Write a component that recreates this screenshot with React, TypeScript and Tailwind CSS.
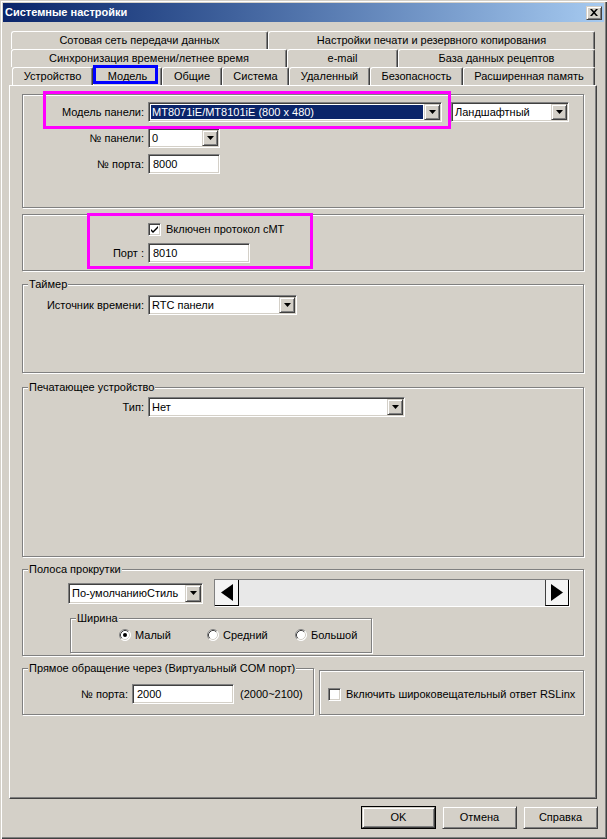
import React from "react";

const sunken =
  "border border-t-[#808080] border-l-[#808080] border-b-white border-r-white shadow-[inset_1px_1px_0_#404040,inset_-1px_-1px_0_#d4d0c8]";
const raised =
  "border border-t-[#d4d0c8] border-l-[#d4d0c8] border-b-[#404040] border-r-[#404040] shadow-[inset_1px_1px_0_#ffffff,inset_-1px_-1px_0_#808080]";
const etched =
  "relative border border-[#808080] shadow-[1px_1px_0_#ffffff,inset_1px_1px_0_#ffffff]";

function DropBtn() {
  return (
    <div className={`flex h-full w-[16px] shrink-0 items-center justify-center bg-[#d4d0c8] ${raised}`}>
      <svg width="7" height="4" viewBox="0 0 7 4">
        <path d="M0 0h7L3.5 4z" fill="#000" />
      </svg>
    </div>
  );
}

function Combo({ value, className, selected }: { value: string; className: string; selected?: boolean }) {
  return (
    <div className={`flex bg-white p-[1px] ${sunken} ${className}`}>
      <div className="flex min-w-0 flex-1 items-stretch p-[1px]">
        <div
          className={`flex flex-1 items-center overflow-hidden whitespace-nowrap pl-[1px] ${
            selected ? "bg-[#0a246a] text-white" : ""
          }`}
        >
          {value}
        </div>
      </div>
      <DropBtn />
    </div>
  );
}

function Input({ value, className }: { value: string; className: string }) {
  return <div className={`flex h-[20px] items-center bg-white pl-[4px] ${sunken} ${className}`}>{value}</div>;
}

function Group({ label, className, children }: { label?: string; className: string; children?: React.ReactNode }) {
  return (
    <div className={`${etched} ${className}`}>
      {label && (
        <span className="absolute -top-[7px] left-[5px] whitespace-nowrap bg-[#d4d0c8] px-[1px] leading-[13px]">
          {label}
        </span>
      )}
      {children}
    </div>
  );
}

function Check({ checked }: { checked?: boolean }) {
  return (
    <div className={`flex h-[13px] w-[13px] shrink-0 items-center justify-center bg-white ${sunken}`}>
      {checked && (
        <svg width="9" height="9" viewBox="0 0 9 9">
          <path d="M1 4l2 2 5-5v2l-5 5-2-2z" fill="#000" />
        </svg>
      )}
    </div>
  );
}

function Radio({ checked }: { checked?: boolean }) {
  return (
    <svg width="12" height="12" viewBox="0 0 12 12" className="shrink-0">
      <circle cx="6" cy="6" r="5.5" fill="#fff" />
      <path d="M2.11 9.89A5.5 5.5 0 0 1 9.89 2.11" stroke="#808080" fill="none" />
      <path d="M9.89 2.11A5.5 5.5 0 0 1 2.11 9.89" stroke="#ffffff" fill="none" />
      <path d="M2.82 9.18A4.5 4.5 0 0 1 9.18 2.82" stroke="#404040" fill="none" />
      <path d="M9.18 2.82A4.5 4.5 0 0 1 2.82 9.18" stroke="#d4d0c8" fill="none" />
      {checked && <circle cx="6" cy="6" r="2" fill="#000" />}
    </svg>
  );
}

function Tab({ label, className, children }: { label: string; className: string; children?: React.ReactNode }) {
  return (
    <div
      className={`relative flex h-[18px] shrink-0 items-center justify-center whitespace-nowrap rounded-tl-[3px] rounded-tr-[2px] border-t border-l border-r border-t-white border-l-white border-r-[#404040] bg-[#d4d0c8] shadow-[inset_-1px_0_0_#808080] ${className}`}
    >
      {label}
      {children}
    </div>
  );
}

function Button({ label, def }: { label: string; def?: boolean }) {
  if (def) {
    return (
      <div className="h-[23px] w-[75px] border border-black">
        <div className={`flex h-full w-full items-center justify-center bg-[#d4d0c8] ${raised}`}>{label}</div>
      </div>
    );
  }
  return (
    <div className={`flex h-[23px] w-[75px] items-center justify-center bg-[#d4d0c8] ${raised}`}>{label}</div>
  );
}

export default function App() {
  return (
    <div className="flex h-[839px] w-[607px] flex-col bg-[#d4d0c8] p-[3px] font-['Liberation_Sans',Arial,sans-serif] text-[11px] leading-[13px] text-black shadow-[inset_1px_1px_0_#d4d0c8,inset_2px_2px_0_#ffffff,inset_-1px_-1px_0_#404040,inset_-2px_-2px_0_#808080]">
      {/* Title bar */}
      <div className="flex h-[19px] shrink-0 items-center justify-between bg-linear-to-r from-[#0a246a] to-[#a6caf0] pl-[2px] pr-[2px]">
        <span className="font-bold text-white">Системные настройки</span>
        <div className={`flex h-[14px] w-[16px] items-center justify-center bg-[#d4d0c8] ${raised}`}>
          <svg width="8" height="7" viewBox="0 0 8 7">
            <path d="M0 0h2l2 2.2L6 0h2L5 3.5 8 7H6L4 4.8 2 7H0l3-3.5z" fill="#000" />
          </svg>
        </div>
      </div>

      {/* Tabs + panel */}
      <div className="ml-[6px] mt-[9px] flex flex-col">
        <div className="ml-[2px] flex">
          <Tab label="Сотовая сеть передачи данных" className="w-[257px]" />
          <Tab label="Настройки печати и резервного копирования" className="w-[327px]" />
        </div>
        <div className="ml-[2px] flex">
          <Tab label="Синхронизация времени/летнее время" className="w-[276px]" />
          <Tab label="e-mail" className="w-[111px]" />
          <Tab label="База данных рецептов" className="w-[197px]" />
        </div>
        <div className="ml-[3px] flex">
          <Tab label="Устройство" className="w-[81px]" />
          <Tab label="Модель" className="z-10 w-[69px]">
            <div className="absolute -left-[1px] -top-[3px] h-[19px] w-[65px] border-[3px] border-[#0000ff]" />
          </Tab>
          <Tab label="Общие" className="w-[60px]" />
          <Tab label="Система" className="w-[67px]" />
          <Tab label="Удаленный" className="w-[81px]" />
          <Tab label="Безопасность" className="w-[93px]" />
          <Tab label="Расширенная память" className="w-[132px]" />
        </div>

        <div className="flex h-[714px] w-[588px] flex-col border-t border-l border-r border-b border-t-white border-l-white border-r-[#404040] border-b-[#404040] pl-[12px] shadow-[inset_-1px_-1px_0_#808080]">
          {/* Model group */}
          <Group className="mt-[8px] h-[114px] w-[562px] shrink-0">
            <div className="pointer-events-none absolute -top-[4px] left-[20px] h-[38px] w-[408px] border-[3px] border-[#ff00ff]" />
            <div className="mt-[7px] flex h-[20px] items-center">
              <div className="w-[125px] pr-[4px] text-right">Модель панели:</div>
              <Combo value="MT8071iE/MT8101iE (800 x 480)" className="h-[20px] w-[294px]" selected />
              <Combo value="Ландшафтный" className="ml-[9px] h-[20px] w-[118px]" />
            </div>
            <div className="mt-[6px] flex h-[20px] items-center">
              <div className="w-[125px] pr-[4px] text-right">№ панели:</div>
              <Combo value="0" className="h-[20px] w-[72px]" />
            </div>
            <div className="mt-[6px] flex h-[20px] items-center">
              <div className="w-[125px] pr-[4px] text-right">№ порта:</div>
              <Input value="8000" className="w-[72px]" />
            </div>
          </Group>

          {/* cMT group */}
          <Group className="mt-[6px] h-[57px] w-[562px] shrink-0">
            <div className="pointer-events-none absolute -top-[2px] left-[64px] h-[56px] w-[226px] border-[3px] border-[#ff00ff]" />
            <div className="ml-[125px] mt-[8px] flex h-[13px] items-center gap-[5px]">
              <Check checked />
              <span>Включен протокол cMT</span>
            </div>
            <div className="mt-[7px] flex h-[20px] items-center">
              <div className="w-[125px] pr-[4px] text-right">Порт :</div>
              <Input value="8010" className="w-[102px]" />
            </div>
          </Group>

          {/* Timer */}
          <Group label="Таймер" className="mt-[13px] h-[89px] w-[562px] shrink-0">
            <div className="mt-[10px] flex h-[20px] items-center">
              <div className="w-[125px] pr-[4px] text-right">Источник времени:</div>
              <Combo value="RTC панели" className="h-[20px] w-[149px]" />
            </div>
          </Group>

          {/* Printer */}
          <Group label="Печатающее устройство" className="mt-[14px] h-[170px] w-[562px] shrink-0">
            <div className="mt-[9px] flex h-[20px] items-center">
              <div className="w-[125px] pr-[4px] text-right">Тип:</div>
              <Combo value="Нет" className="h-[20px] w-[257px]" />
            </div>
          </Group>

          {/* Scrollbar */}
          <Group label="Полоса прокрутки" className="mt-[12px] h-[87px] w-[562px] shrink-0">
            <div className="ml-[45px] mt-[9px] flex h-[28px] items-center gap-[11px]">
              <Combo value="По-умолчаниюСтиль" className="h-[21px] w-[135px]" />
              <div className="flex h-[28px] w-[356px] border border-t-[#808080] border-l-[#808080] border-b-white border-r-white bg-[#e8e8e8]">
                <div className="flex h-full w-[24px] items-center justify-center border-r border-b border-r-black border-b-black bg-[#f4f4f4]">
                  <svg width="12" height="17" viewBox="0 0 12 17">
                    <path d="M12 0v17L0 8.5z" fill="#000" />
                  </svg>
                </div>
                <div className="flex-1" />
                <div className="flex h-full w-[24px] items-center justify-center border-l border-r border-b border-l-[#404040] border-r-black border-b-black bg-[#f4f4f4]">
                  <svg width="12" height="17" viewBox="0 0 12 17">
                    <path d="M0 0v17l12-8.5z" fill="#000" />
                  </svg>
                </div>
              </div>
            </div>
            <Group label="Ширина" className="ml-[47px] mt-[11px] h-[35px] w-[302px]">
              <div className="ml-[48px] mt-[10px] flex h-[12px] items-center">
                <div className="flex w-[88px] shrink-0 items-center gap-[4px]">
                  <Radio checked />
                  <span>Малый</span>
                </div>
                <div className="flex w-[88px] shrink-0 items-center gap-[4px]">
                  <Radio />
                  <span>Средний</span>
                </div>
                <div className="flex shrink-0 items-center gap-[4px]">
                  <Radio />
                  <span>Большой</span>
                </div>
              </div>
            </Group>
          </Group>

          {/* Bottom row */}
          <div className="mt-[12px] flex gap-[5px]">
            <Group label="Прямое обращение через (Виртуальный COM порт)" className="h-[47px] w-[292px] shrink-0">
              <div className="mt-[15px] flex h-[20px] items-center">
                <div className="w-[109px] pr-[4px] text-right">№ порта:</div>
                <Input value="2000" className="w-[102px]" />
                <span className="ml-[6px]">(2000~2100)</span>
              </div>
            </Group>
            <Group className="mt-[2px] h-[45px] w-[265px] shrink-0">
              <div className="ml-[8px] mt-[17px] flex h-[13px] items-center gap-[5px]">
                <Check />
                <span className="w-[231px] overflow-hidden whitespace-nowrap">
                  Включить широковещательный ответ RSLinx
                </span>
              </div>
            </Group>
          </div>
        </div>
      </div>

      {/* Buttons */}
      <div className="mt-[7px] flex justify-end gap-[6px] pr-[6px]">
        <Button label="OK" def />
        <Button label="Отмена" />
        <Button label="Справка" />
      </div>
    </div>
  );
}
